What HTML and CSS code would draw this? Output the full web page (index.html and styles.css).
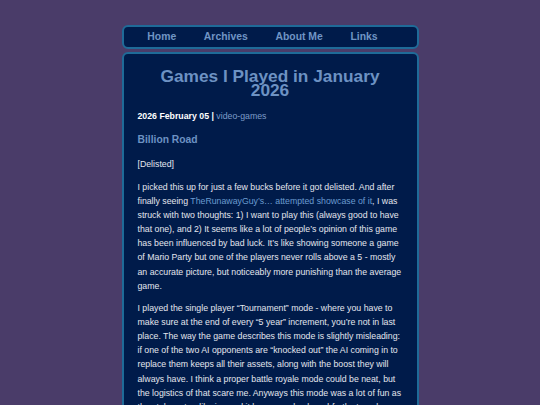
FILE: index.html
```html
<!DOCTYPE html>
<html lang="en">
<head>
<meta charset="utf-8">
<title>Games I Played in January 2026</title>
<link rel="stylesheet" href="styles.css">
</head>
<body>
<nav class="nav">
  <a class="nav-link" href="#">Home</a>
  <a class="nav-link" href="#">Archives</a>
  <a class="nav-link" href="#">About Me</a>
  <a class="nav-link" href="#">Links</a>
</nav>
<main class="post">
  <h1 class="post-title">Games I Played in January 2026</h1>
  <p class="post-meta"><strong>2026 February 05 |</strong> <a class="tag" href="#">video-games</a></p>
  <h2 class="game-title">Billion Road</h2>
  <p class="para">[Delisted]</p>
  <p class="para">I picked this up for just a few bucks before it got delisted. And after finally seeing <a class="link" href="#">TheRunawayGuy’s… attempted showcase of it</a>, I was struck with two thoughts: 1) I want to play this (always good to have that one), and 2) It seems like a lot of people’s opinion of this game has been influenced by bad luck. It’s like showing someone a game of Mario Party but one of the players never rolls above a 5 - mostly an accurate picture, but noticeably more punishing than the average game.</p>
  <p class="para">I played the single player “Tournament” mode - where you have to make sure at the end of every “5 year” increment, you’re not in last place. The way the game describes this mode is slightly misleading: if one of the two AI opponents are “knocked out” the AI coming in to replace them keeps all their assets, along with the boost they will always have. I think a proper battle royale mode could be neat, but the logistics of that scare me. Anyways this mode was a lot of fun as the stakes steadily rise and it became a back-and-forth struggle.</p>
</main>
</body>
</html>
```
FILE: styles.css
```css
html, body {
  margin: 0;
  padding: 0;
}
body {
  background: #4a3c69;
  font-family: "Liberation Sans", Arial, sans-serif;
  color: #e4e6ee;
  padding-top: 25px;
  height: 405px;
  overflow: hidden;
  box-sizing: border-box;
}
.nav {
  width: 297px;
  box-sizing: border-box;
  margin: 0 auto;
  background: #001b4a;
  border: 2px solid #1f6b98;
  border-radius: 6px;
  display: flex;
  gap: 27.7px;
  padding-left: 23.8px;
  height: 24px;
}
.nav-link {
  font-size: 10.4px;
  line-height: 20px;
  font-weight: bold;
  color: #7095c5;
  text-decoration: none;
}
.post {
  width: 297px;
  box-sizing: border-box;
  margin: 3px auto 0;
  background: #001b4a;
  border: 2px solid #1f6b98;
  border-radius: 6px;
  padding: 15px 14px 20px;
  min-height: 400px;
}
.post-title {
  margin: 0 4px;
  font-size: 17.3px;
  line-height: 14px;
  text-align: center;
  color: #6d92c3;
  font-weight: bold;
}
.post-meta {
  margin: 11.5px 0 0;
  font-size: 8.75px;
  line-height: 14.1px;
  color: #ffffff;
}
.tag {
  color: #7d9cc8;
  text-decoration: none;
}
.game-title {
  margin: 10.7px 0 0;
  font-size: 10.3px;
  line-height: 14px;
  color: #6d92c3;
}
.para {
  margin: 10.2px 0 0;
  font-size: 8.75px;
  line-height: 14.1px;
}
.para + .para {
  margin-top: 8.4px;
}
.link {
  color: #6b9bd0;
  text-decoration: none;
}
```
